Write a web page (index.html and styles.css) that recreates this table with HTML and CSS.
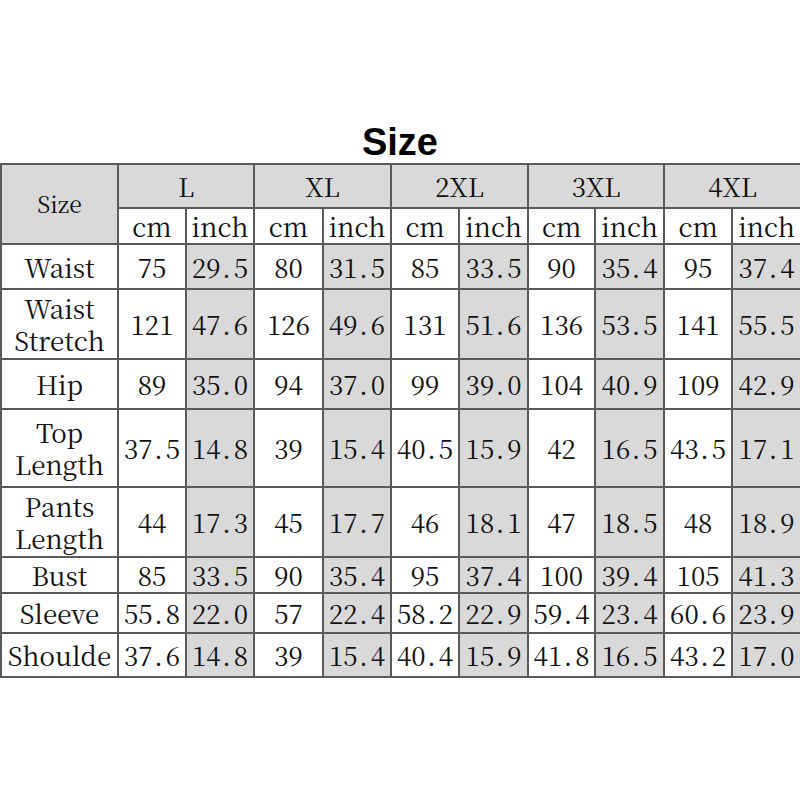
FILE: index.html
```html
<!DOCTYPE html>
<html>
<head>
<meta charset="utf-8">
<link rel="stylesheet" href="styles.css">
</head>
<body>
<div class="page">
  <h1 class="title">Size</h1>
  <table class="chart">
    <colgroup>
      <col class="c-label">
      <col class="c68"><col class="c68"><col class="c69"><col class="c68"><col class="c68"><col class="c69"><col class="c67"><col class="c69"><col class="c68"><col class="c69">
    </colgroup>
    <tr class="h44">
      <td class="gray size-head" rowspan="2">Size</td>
      <td class="gray" colspan="2">L</td>
      <td class="gray" colspan="2">XL</td>
      <td class="gray" colspan="2">2XL</td>
      <td class="gray" colspan="2">3XL</td>
      <td class="gray" colspan="2">4XL</td>
    </tr>
    <tr class="h36">
      <td>cm</td><td>inch</td>
      <td>cm</td><td>inch</td>
      <td>cm</td><td>inch</td>
      <td>cm</td><td>inch</td>
      <td>cm</td><td>inch</td>
    </tr>
    <tr class="h45">
      <td class="label">Waist</td>
      <td>75</td><td class="gray">29<span class="dot">.</span>5</td>
      <td>80</td><td class="gray">31<span class="dot">.</span>5</td>
      <td>85</td><td class="gray">33<span class="dot">.</span>5</td>
      <td>90</td><td class="gray">35<span class="dot">.</span>4</td>
      <td>95</td><td class="gray">37<span class="dot">.</span>4</td>
    </tr>
    <tr class="h70">
      <td class="label two">Waist<br>Stretch</td>
      <td>121</td><td class="gray">47<span class="dot">.</span>6</td>
      <td>126</td><td class="gray">49<span class="dot">.</span>6</td>
      <td>131</td><td class="gray">51<span class="dot">.</span>6</td>
      <td>136</td><td class="gray">53<span class="dot">.</span>5</td>
      <td>141</td><td class="gray">55<span class="dot">.</span>5</td>
    </tr>
    <tr class="h50">
      <td class="label">Hip</td>
      <td>89</td><td class="gray">35<span class="dot">.</span>0</td>
      <td>94</td><td class="gray">37<span class="dot">.</span>0</td>
      <td>99</td><td class="gray">39<span class="dot">.</span>0</td>
      <td>104</td><td class="gray">40<span class="dot">.</span>9</td>
      <td>109</td><td class="gray">42<span class="dot">.</span>9</td>
    </tr>
    <tr class="h78">
      <td class="label two">Top<br>Length</td>
      <td>37<span class="dot">.</span>5</td><td class="gray">14<span class="dot">.</span>8</td>
      <td>39</td><td class="gray">15<span class="dot">.</span>4</td>
      <td>40<span class="dot">.</span>5</td><td class="gray">15<span class="dot">.</span>9</td>
      <td>42</td><td class="gray">16<span class="dot">.</span>5</td>
      <td>43<span class="dot">.</span>5</td><td class="gray">17<span class="dot">.</span>1</td>
    </tr>
    <tr class="h70">
      <td class="label two">Pants<br>Length</td>
      <td>44</td><td class="gray">17<span class="dot">.</span>3</td>
      <td>45</td><td class="gray">17<span class="dot">.</span>7</td>
      <td>46</td><td class="gray">18<span class="dot">.</span>1</td>
      <td>47</td><td class="gray">18<span class="dot">.</span>5</td>
      <td>48</td><td class="gray">18<span class="dot">.</span>9</td>
    </tr>
    <tr class="h36">
      <td class="label">Bust</td>
      <td>85</td><td class="gray">33<span class="dot">.</span>5</td>
      <td>90</td><td class="gray">35<span class="dot">.</span>4</td>
      <td>95</td><td class="gray">37<span class="dot">.</span>4</td>
      <td>100</td><td class="gray">39<span class="dot">.</span>4</td>
      <td>105</td><td class="gray">41<span class="dot">.</span>3</td>
    </tr>
    <tr class="h40">
      <td class="label">Sleeve</td>
      <td>55<span class="dot">.</span>8</td><td class="gray">22<span class="dot">.</span>0</td>
      <td>57</td><td class="gray">22<span class="dot">.</span>4</td>
      <td>58<span class="dot">.</span>2</td><td class="gray">22<span class="dot">.</span>9</td>
      <td>59<span class="dot">.</span>4</td><td class="gray">23<span class="dot">.</span>4</td>
      <td>60<span class="dot">.</span>6</td><td class="gray">23<span class="dot">.</span>9</td>
    </tr>
    <tr class="h44">
      <td class="label">Shoulde</td>
      <td>37<span class="dot">.</span>6</td><td class="gray">14<span class="dot">.</span>8</td>
      <td>39</td><td class="gray">15<span class="dot">.</span>4</td>
      <td>40<span class="dot">.</span>4</td><td class="gray">15<span class="dot">.</span>9</td>
      <td>41<span class="dot">.</span>8</td><td class="gray">16<span class="dot">.</span>5</td>
      <td>43<span class="dot">.</span>2</td><td class="gray">17<span class="dot">.</span>0</td>
    </tr>
  </table>
</div>
</body>
</html>
```

FILE: styles.css
```css
html, body {
  margin: 0;
  padding: 0;
  background: #ffffff;
}

.page {
  width: 800px;
  padding-top: 123px;
}

.title {
  margin: 0 0 2px 0;
  font-family: "Liberation Sans", Arial, sans-serif;
  font-weight: bold;
  font-size: 38px;
  line-height: 38px;
  text-align: center;
  color: #000;
}

.chart {
  width: 800px;
  border-collapse: collapse;
  table-layout: fixed;
  font-family: "Noto Serif CJK SC", "Liberation Serif", serif;
  font-size: 26px;
  color: #111;
}

.c-label { width: 117px; }
.c67 { width: 67px; }
.c68 { width: 68px; }
.c69 { width: 69px; }

.chart td {
  font-family: "Noto Serif CJK SC", "Liberation Serif", serif;
  font-size: 26px;
  font-weight: 400;
  border: 2px solid #5a5a5a;
  padding: 0;
  text-align: center;
  vertical-align: middle;
  line-height: 30px;
  white-space: nowrap;
}

.chart .gray {
  background: #d9d9d9;
}

.chart .size-head {
  font-size: 23px;
}

.chart .two {
  line-height: 32px;
}

.dot {
  display: inline-block;
  width: 0.5em;
  text-align: left;
  text-indent: 0.06em;
}

.h36 { height: 36px; }
.h40 { height: 40px; }
.h44 { height: 44px; }
.h45 { height: 45px; }
.h50 { height: 50px; }
.h70 { height: 70px; }
.h78 { height: 78px; }
```
